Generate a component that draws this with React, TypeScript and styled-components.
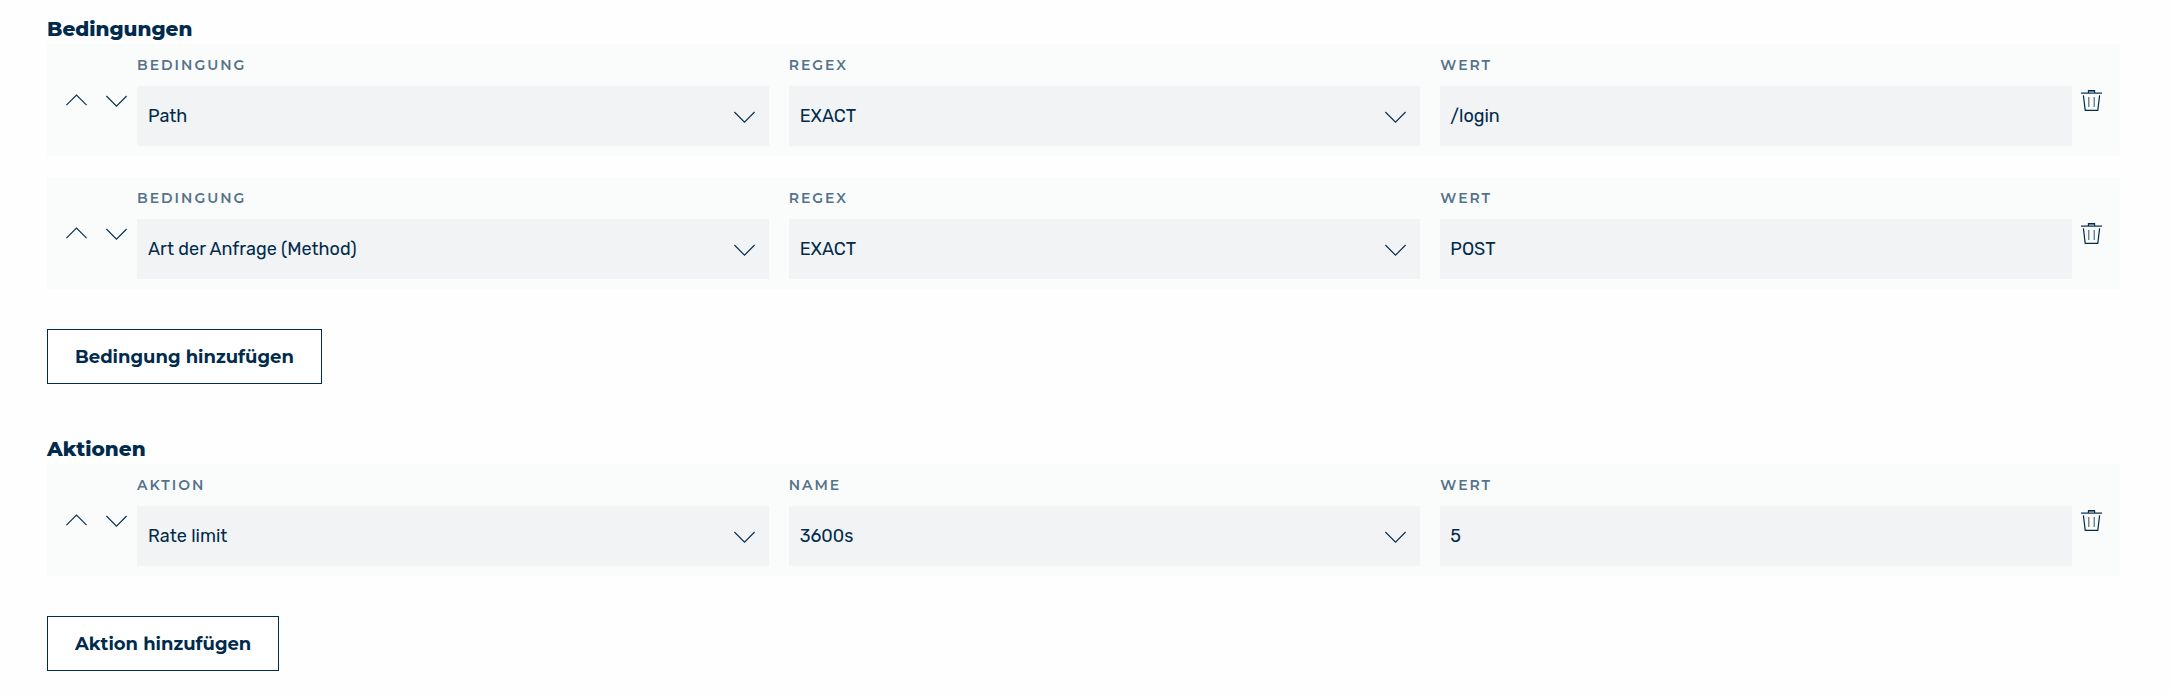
import React, { useId } from "react";
import styled, { createGlobalStyle } from "styled-components";

const ink = "#002b4c";
const headingFont = `Montserrat, Inter, "Liberation Sans", sans-serif`;
const bodyFont = `Rubik, Roboto, "Liberation Sans", sans-serif`;

const GlobalStyle = createGlobalStyle`
  *, *::before, *::after { box-sizing: border-box; }
  body { margin: 0; background: #fefefe; color: ${ink}; font-family: ${bodyFont}; }
`;

const Page = styled.main`
  display: flex;
  flex-direction: column;
  gap: 53px;
  padding: 17px 51px 24px 47px;
`;

const Section = styled.section`
  display: flex;
  flex-direction: column;
  align-items: flex-start;
`;

const Heading = styled.h2`
  margin: 0 0 3px;
  font: 800 20px/24px ${headingFont};
`;

const RuleList = styled.div`
  display: flex;
  flex-direction: column;
  gap: 21px;
  width: 100%;
  margin-bottom: 40px;
`;

const RuleRow = styled.div`
  display: flex;
  align-items: center;
  padding: 10px 18px 10px 19px;
  background: #fafcfb;
`;

const MoveButtons = styled.div`
  display: flex;
  gap: 19px;
  margin-right: 10px;
`;

const IconButton = styled.button`
  display: flex;
  padding: 0;
  border: 0;
  background: none;
  color: ${ink};
  cursor: pointer;
`;

const Fields = styled.div`
  flex: 1;
  display: grid;
  grid-template-columns: repeat(3, minmax(0, 1fr));
  gap: 20px;
  margin-right: 9px;
`;

const Field = styled.div`
  display: flex;
  flex-direction: column;
  gap: 10px;
`;

const Label = styled.label`
  font: 600 14px/22px ${headingFont};
  letter-spacing: 2px;
  text-transform: uppercase;
  color: #54728a;
`;

const SelectBox = styled.div`
  display: grid;
  align-items: center;

  > * { grid-area: 1 / 1; }

  > svg {
    justify-self: end;
    margin-right: 14px;
    pointer-events: none;
  }
`;

const Select = styled.select`
  appearance: none;
  width: 100%;
  height: 60px;
  padding: 0 48px 0 11px;
  border: 0;
  border-radius: 0;
  background: #f2f3f5;
  color: ${ink};
  font: 400 18px/24px ${bodyFont};
`;

const Input = styled.input`
  width: 100%;
  height: 60px;
  padding: 0 10px;
  border: 0;
  border-radius: 0;
  background: #f2f3f5;
  color: ${ink};
  font: 400 18px/24px ${bodyFont};
`;

const AddButton = styled.button`
  height: 55px;
  padding: 0 27px;
  border: 1px solid ${ink};
  border-radius: 0;
  background: #fff;
  color: ${ink};
  font: 700 18px/24px ${headingFont};
  cursor: pointer;
`;

const Chevron = ({ up = false }: { up?: boolean }) => (
  <svg width="21" height="21" viewBox="0 0 21 21" fill="none" stroke={ink} strokeWidth="1.1" aria-hidden="true">
    <path d={up ? "M.4 15.2 10.5 5.1l10.1 10.1" : "M.4 6l10.1 10.1L20.6 6"} />
  </svg>
);

const Trash = () => (
  <svg width="21" height="21" viewBox="0 0 21 21" fill="none" stroke={ink} aria-hidden="true">
    <path d="M0 3.1h21" strokeWidth="1.2" />
    <path d="M7.4 3V.6h6.2V3" strokeWidth="1.1" />
    <path d="M7.5 1.5h6" strokeOpacity=".45" />
    <path d="M2.4 5.4 4.2 20.4h12.6l1.8-15" strokeWidth="1.2" />
    <path d="M7.8 7v10M13.2 7v10" strokeWidth="1.1" strokeOpacity=".75" />
  </svg>
);

interface Rule {
  labels: [string, string, string];
  type: string;
  option: string;
  value: string;
}

const conditionLabels: Rule["labels"] = ["Bedingung", "Regex", "Wert"];

const conditions: Rule[] = [
  { labels: conditionLabels, type: "Path", option: "EXACT", value: "/login" },
  { labels: conditionLabels, type: "Art der Anfrage (Method)", option: "EXACT", value: "POST" },
];

const actions: Rule[] = [
  { labels: ["Aktion", "Name", "Wert"], type: "Rate limit", option: "3600s", value: "5" },
];

const SelectField = ({ label, value }: { label: string; value: string }) => {
  const id = useId();
  return (
    <Field>
      <Label htmlFor={id}>{label}</Label>
      <SelectBox>
        <Select id={id} defaultValue={value}>
          <option>{value}</option>
        </Select>
        <Chevron />
      </SelectBox>
    </Field>
  );
};

const TextField = ({ label, value }: { label: string; value: string }) => {
  const id = useId();
  return (
    <Field>
      <Label htmlFor={id}>{label}</Label>
      <Input id={id} type="text" defaultValue={value} />
    </Field>
  );
};

const RuleSection = ({ title, rules, addLabel }: { title: string; rules: Rule[]; addLabel: string }) => (
  <Section>
    <Heading>{title}</Heading>
    <RuleList>
      {rules.map((rule) => (
        <RuleRow key={rule.type}>
          <MoveButtons>
            <IconButton type="button" aria-label="Nach oben"><Chevron up /></IconButton>
            <IconButton type="button" aria-label="Nach unten"><Chevron /></IconButton>
          </MoveButtons>
          <Fields>
            <SelectField label={rule.labels[0]} value={rule.type} />
            <SelectField label={rule.labels[1]} value={rule.option} />
            <TextField label={rule.labels[2]} value={rule.value} />
          </Fields>
          <IconButton type="button" aria-label="Löschen"><Trash /></IconButton>
        </RuleRow>
      ))}
    </RuleList>
    <AddButton type="button">{addLabel}</AddButton>
  </Section>
);

export default function App() {
  return (
    <>
      <GlobalStyle />
      <Page>
        <RuleSection title="Bedingungen" rules={conditions} addLabel="Bedingung hinzufügen" />
        <RuleSection title="Aktionen" rules={actions} addLabel="Aktion hinzufügen" />
      </Page>
    </>
  );
}
